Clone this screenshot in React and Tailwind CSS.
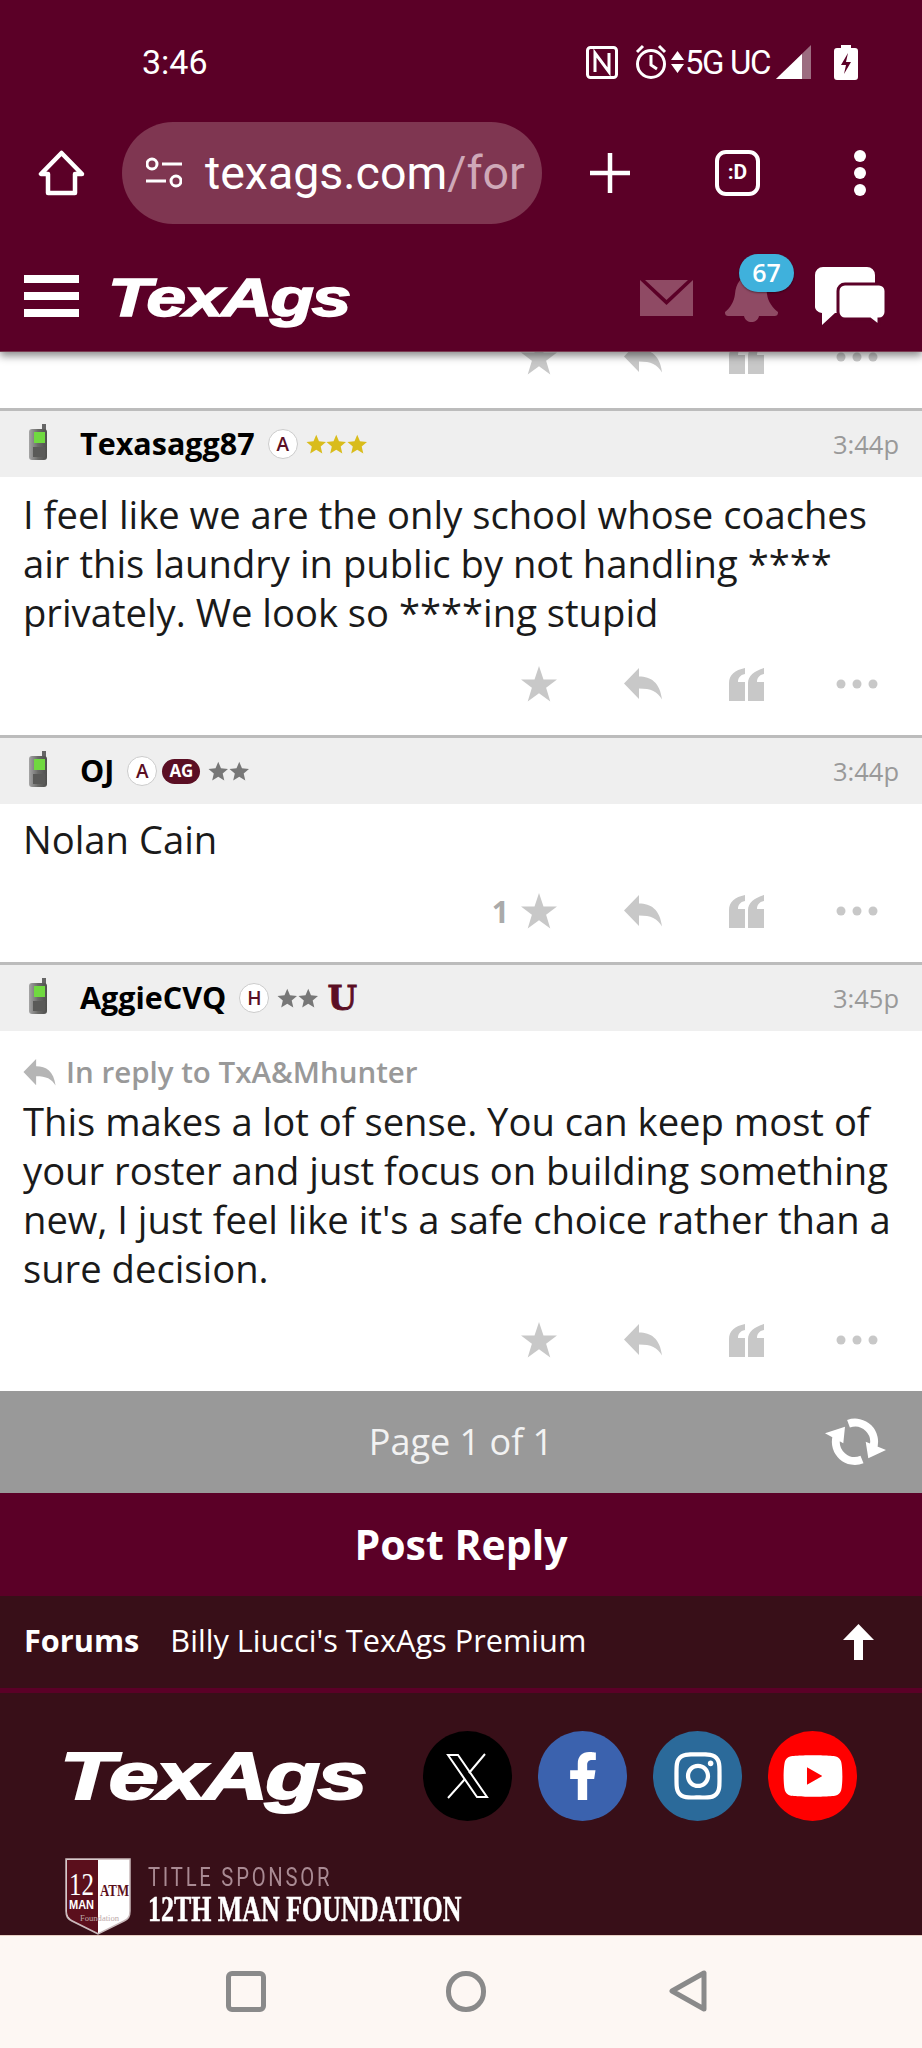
import React from "react";
import { FaFacebookF, FaInstagram, FaYoutube } from "react-icons/fa";

const OPEN = "font-['Open_Sans',sans-serif]";

function Logo({ className }) {
  return (
    <span className={`font-['Liberation_Sans',sans-serif] font-bold italic text-white whitespace-nowrap inline-block origin-left ${className}`}>
      TexAgs
    </span>
  );
}

function Phone() {
  return (
    <svg width="22" height="38" viewBox="0 0 22 38" className="shrink-0 -mt-[4px]">
      <defs>
        <filter id="soft" x="-20%" y="-20%" width="140%" height="140%">
          <feGaussianBlur stdDeviation="0.7" />
        </filter>
        <linearGradient id="body" x1="0" x2="1" y1="0" y2="0">
          <stop offset="0" stopColor="#a5a5a5" />
          <stop offset="0.5" stopColor="#6a6a68" />
          <stop offset="1" stopColor="#4f4f4d" />
        </linearGradient>
      </defs>
      <g filter="url(#soft)">
        <rect x="15" y="1" width="4" height="8" fill="#666" />
        <rect x="2" y="6" width="18" height="31" rx="3" fill="url(#body)" />
        <rect x="7" y="9" width="11" height="11" fill="#6fd93f" />
        <rect x="6" y="24" width="12" height="10" fill="#5a5a58" />
      </g>
    </svg>
  );
}

function Circle({ letter }) {
  return (
    <span className={`${OPEN} ml-[13px] w-[30px] h-[30px] rounded-full bg-white border border-[#ccc] flex items-center justify-center text-[19px] font-semibold text-[#5b0f24]`}>
      {letter}
    </span>
  );
}

function Stars({ n, color }) {
  return (
    <span className={`flex ml-[8px] ${color}`}>
      {Array.from({ length: n }).map((_, i) => (
        <svg key={i} width="20.500" height="20.500" viewBox="0 0 24 24" fill="currentColor">
          <path d="M12 1l3.200 7.600 8.200.7-6.200 5.400 1.900 8L12 18.400 4.900 22.700l1.900-8L.6 9.300l8.200-.7z" />
        </svg>
      ))}
    </span>
  );
}

function PostHead({ name, time, children }) {
  return (
    <div className="border-t-[3px] border-[#bcbcbc]">
      <div className={`${OPEN} h-[66px] bg-[#efefef] flex items-center pl-[27px] pr-[23px]`}>
        <Phone />
        <span className="ml-[31px] text-[30.500px] font-bold text-black">{name}</span>
        {children}
        <span className="ml-auto text-[25.500px] text-[#999]">{time}</span>
      </div>
    </div>
  );
}

function Actions({ count }) {
  return (
    <div className={`${OPEN} h-[98px] flex items-center justify-end pr-[44px] pb-[4px] text-[#c8c8c8]`}>
      {count && <span className="mr-[12px] text-[30px] font-bold text-[#aaa]">{count}</span>}
      <svg width="36" height="36" viewBox="0 0 36 36" fill="currentColor">
        <path d="M18 0l4.500 13.400 13.500.1-10.900 8.300 4.200 13.700L18 27.300 6.700 35.500l4.200-13.700L0 13.500l13.500-.1z" />
      </svg>
      <svg width="38" height="32" viewBox="0 0 38 32" fill="currentColor" className="ml-[67px]">
        <path d="M15 0v8.500c12 0 21 6 23 23-4.500-8-11-11-23-11V31L0 15.500z" />
      </svg>
      <svg width="35" height="33" viewBox="0 0 35 33" fill="currentColor" className="ml-[67px]">
        <path d="M0 33V15C0 7 6 2 16 0v6c-5 1-7 4-7 8h7v19zM19 33V15c0-7 6-12 16-15v6c-5 1-7 4-7 8h7v19z" />
      </svg>
      <svg width="42" height="10" viewBox="0 0 42 10" fill="currentColor" className="ml-[72px]">
        <circle cx="5" cy="5" r="4.500" />
        <circle cx="21" cy="5" r="4.500" />
        <circle cx="37" cy="5" r="4.500" />
      </svg>
    </div>
  );
}

function StatusBar() {
  return (
    <div className="h-[110px] flex items-center pl-[142px] pr-[64px] pt-[14px] text-white font-['Roboto',sans-serif]">
      <span className="text-[34px]">3:46</span>
      <div className="ml-auto flex items-center">
        <svg width="32" height="33" viewBox="0 0 32 33">
          <rect x="1.500" y="1.500" width="29" height="30" rx="3" fill="none" stroke="white" strokeWidth="3" />
          <path d="M9 26V7l14 19V7" fill="none" stroke="white" strokeWidth="3" />
        </svg>
        <svg width="34" height="36" viewBox="0 0 34 36" fill="none" stroke="white" strokeWidth="3" className="ml-[16px]">
          <circle cx="17" cy="20" r="13.500" />
          <path d="M17 11v10l6 4M3 8l6-6M31 8l-6-6" />
        </svg>
        <svg width="13" height="24" viewBox="0 0 13 24" fill="white" className="ml-[3px]">
          <path d="M6.500 1L13 10H0zM6.500 23L0 14h13z" />
        </svg>
        <span className="text-[33px] tracking-[-1.500px] leading-none ml-[1px]">5G</span>
        <span className="text-[33px] tracking-[-1.500px] leading-none ml-[7px]">UC</span>
        <svg width="35" height="34" viewBox="0 0 35 34" className="ml-[6px]">
          <path d="M0 34L35 0v34z" fill="#9c6c80" />
          <path d="M0 34L26 9v25z" fill="white" />
        </svg>
        <svg width="24" height="35" viewBox="0 0 24 35" className="ml-[23px]">
          <path d="M7 0h10v3h4a3 3 0 0 1 3 3v26a3 3 0 0 1-3 3H3a3 3 0 0 1-3-3V6a3 3 0 0 1 3-3h4z" fill="white" />
          <path d="M14 8l-7 12h5l-2 9 7-12h-5z" fill="#5b0027" />
        </svg>
      </div>
    </div>
  );
}

function BrowserBar() {
  return (
    <div className="h-[125px] flex items-center pl-[38px] text-white font-['Roboto',sans-serif]">
      <svg width="47" height="46" viewBox="0 0 47 46" fill="none" stroke="white" strokeWidth="4.500" strokeLinejoin="round">
        <path d="M23.500 3L3 24h7v19h27V24h7z" />
      </svg>
      <div className="ml-[37px] w-[420px] h-[102px] rounded-full bg-[#7f3651] flex items-center pl-[24px] overflow-hidden">
        <svg width="36" height="32" viewBox="0 0 36 32" fill="none" stroke="white" strokeWidth="3" className="shrink-0">
          <circle cx="6" cy="7" r="5" />
          <path d="M16 7h20M0 24h20" />
          <circle cx="30" cy="24" r="5" />
        </svg>
        <span className="ml-[23px] pt-[3px] whitespace-nowrap text-[46.500px]">
          texags.com<span className="text-[#cfa9b8]">/for</span>
        </span>
      </div>
      <svg width="40" height="40" viewBox="0 0 40 40" stroke="white" strokeWidth="4.500" className="ml-[48px]">
        <path d="M20 0v40M0 20h40" />
      </svg>
      <div className="ml-[85px] w-[45px] h-[46px] rounded-[11px] border-[4px] border-white flex items-center justify-center text-[21px] font-bold">
        :D
      </div>
      <div className="ml-[94px] flex flex-col gap-[5px]">
        <span className="w-[12px] h-[12px] rounded-full bg-white" />
        <span className="w-[12px] h-[12px] rounded-full bg-white" />
        <span className="w-[12px] h-[12px] rounded-full bg-white" />
      </div>
    </div>
  );
}

function SiteBar() {
  return (
    <div className="h-[116px] flex items-center pl-[24px] pt-[6px]">
      <div className="w-[55px] flex flex-col gap-[9px]">
        <span className="h-[8px] bg-white" />
        <span className="h-[8px] bg-white" />
        <span className="h-[8px] bg-white" />
      </div>
      <div className="ml-[29px] mt-[3px] w-[240px] h-[60px] flex items-center">
        <Logo className="text-[53px] leading-none tracking-[-1.600px] [-webkit-text-stroke:1.600px_white] scale-x-[1.34]" />
      </div>
      <svg width="53" height="36" viewBox="0 0 53 36" className="ml-[292px] mt-[4px]">
        <path d="M0 0h53v36H0z" fill="#8f4a64" />
        <path d="M0 0l26.500 25L53 0" fill="#5b0027" />
        <path d="M5 0l21.500 20L48 0z" fill="#8f4a64" />
      </svg>
      <div className="relative ml-[32px] mt-[6px]">
        <svg width="53" height="46" viewBox="0 0 53 46" fill="#8f4a64">
          <path d="M26 0c11 0 15 8 16 18 1 8 6 14 11 18 0 3-1 4-4 4H4c-3 0-4-1-4-4 5-4 9-10 10-18C11 8 15 0 26 0zM19 40h15c-1 4-4 6-7.500 6S20 44 19 40z" />
        </svg>
        <span className={`${OPEN} absolute -top-[22px] left-[14px] w-[55px] h-[38px] rounded-full bg-[#3fb1dc] text-white text-[25px] font-semibold flex items-center justify-center shadow-[0_1px_2px_rgba(0,0,0,0.4)]`}>
          67
        </span>
      </div>
      <svg width="71" height="59" viewBox="0 0 71 59" className="ml-[37px]">
        <path d="M8 0h44a8 8 0 0 1 8 8v30a8 8 0 0 1-8 8H20L7 58V46a7 7 0 0 1-7-8V8a8 8 0 0 1 8-8z" fill="white" />
        <path d="M30 17h34a7 7 0 0 1 7 7v21a7 7 0 0 1-7 7h0v7L55 52H30a7 7 0 0 1-7-7V24a7 7 0 0 1 7-7z" fill="white" stroke="#5b0027" strokeWidth="3" />
      </svg>
    </div>
  );
}

function Social({ bg, children }) {
  return (
    <span className={`w-[89px] h-[90px] rounded-full flex items-center justify-center text-white ${bg}`}>
      {children}
    </span>
  );
}

function Shield() {
  return (
    <svg width="66" height="77" viewBox="0 0 66 77" className="shrink-0 overflow-visible">
      <path d="M1 1h64v52c0 6-2 8-6 10L33 76 7 63c-4-2-6-4-6-10z" fill="white" stroke="#c9b9bb" strokeWidth="1.500" />
      <path d="M2 2h31v73L7 62c-3-2-5-4-5-9z" fill="#5b0f1c" />
      <text x="4" y="37" fill="white" fontSize="32" fontFamily="Liberation Serif" textLength="25" lengthAdjust="spacingAndGlyphs">12</text>
      <text x="4" y="51" fill="white" fontSize="13" fontWeight="bold" fontFamily="Liberation Sans" textLength="25" lengthAdjust="spacingAndGlyphs">MAN</text>
      <text x="35" y="38" fill="#5b0f1c" fontSize="16" fontWeight="bold" fontFamily="Liberation Serif" textLength="29" lengthAdjust="spacingAndGlyphs">ATM</text>
      <text x="15" y="63" fill="#bda9a9" fontSize="8" fontFamily="Liberation Serif" textLength="39" lengthAdjust="spacingAndGlyphs">Foundation</text>
    </svg>
  );
}

export default function App() {
  return (
    <div className="w-[922px] h-[2048px] overflow-hidden flex flex-col bg-white">
      <header className="relative z-10 bg-[#5b0027] shadow-[0_4px_8px_rgba(0,0,0,0.45)] border-b border-[#7a3a50]">
        <StatusBar />
        <BrowserBar />
        <SiteBar />
      </header>

      <div className="h-[56px] overflow-hidden">
        <div className="-mt-[42px]">
          <Actions />
        </div>
      </div>

      <PostHead name="Texasagg87" time="3:44p">
        <Circle letter="A" />
        <Stars n={3} color="text-[#d9bc1c]" />
      </PostHead>
      <div className={`${OPEN} pt-[13px] px-[23px] text-[38.200px] leading-[49px] text-[#1a1a1a]`}>
        I feel like we are the only school whose coaches air this laundry in public by not handling **** privately. We look so ****ing stupid
      </div>
      <Actions />

      <PostHead name="OJ" time="3:44p">
        <Circle letter="A" />
        <span className={`${OPEN} ml-[5px] h-[25px] px-[7px] rounded-full bg-[#5b0f24] text-white text-[17px] font-bold flex items-center`}>AG</span>
        <Stars n={2} color="text-[#777]" />
      </PostHead>
      <div className={`${OPEN} pt-[11px] px-[23px] text-[38.200px] leading-[49px] text-[#1a1a1a]`}>Nolan Cain</div>
      <Actions count="1" />

      <PostHead name="AggieCVQ" time="3:45p">
        <Circle letter="H" />
        <Stars n={2} color="text-[#777]" />
        <span className="ml-[9px] font-['DejaVu_Serif',serif] font-bold text-[34px] leading-none text-[#5b0f24] [-webkit-text-stroke:0.8px_#5b0f24]">U</span>
      </PostHead>
      <div className={`${OPEN} h-[66px] pl-[23px] pt-[16px] flex items-center text-[29.500px] font-semibold text-[#999]`}>
        <svg width="33" height="27" viewBox="0 0 38 32" fill="#b5b5b5">
          <path d="M15 0v8.500c12 0 21 6 23 23-4.500-8-11-11-23-11V31L0 15.500z" />
        </svg>
        <span className="ml-[10px]">In reply to TxA&amp;Mhunter</span>
      </div>
      <div className={`${OPEN} px-[23px] text-[38.200px] leading-[49px] text-[#1a1a1a]`}>
        This makes a lot of sense. You can keep most of your roster and just focus on building something new, I just feel like it's a safe choice rather than a sure decision.
      </div>
      <Actions />

      <div className={`${OPEN} h-[102px] bg-[#999] relative flex items-center justify-center text-[36px] text-[#f2f2f2]`}>
        Page 1 of 1
        <svg width="61" height="47" viewBox="0 0 61 47" className="absolute right-[36px] top-[27px]">
          <g fill="none" stroke="white" strokeWidth="8">
            <path d="M23.500 5.800A19 19 0 0 1 47.900 30.200" />
            <path d="M37 41.500A19 19 0 0 1 11.500 19" />
          </g>
          <path d="M40.700 23.700L61 32 43.300 40.300zM0 15.300L20 8.700 18.300 25.300z" fill="white" />
        </svg>
      </div>
      <div className={`${OPEN} h-[103px] bg-[#5b0027] flex items-center justify-center text-[41px] font-bold text-white`}>
        Post Reply
      </div>
      <div className={`${OPEN} h-[92px] bg-[#380f18] flex items-center pl-[24px] pr-[48px] pb-[4px] text-white text-[30.700px]`}>
        <span className="font-bold">Forums</span>
        <span className="ml-[31px]">Billy Liucci's TexAgs Premium</span>
        <svg width="31" height="36" viewBox="0 0 31 36" fill="white" className="ml-auto mt-[4px]">
          <path d="M15.500 0L31 16H20v20h-9V16H0z" />
        </svg>
      </div>
      <div className="h-[5px] bg-[#5b0027]" />

      <footer className="flex-1 bg-[#380f18] flex flex-col pl-[65px] pt-[38px] border-b border-[#e8cfc4]">
        <div className="flex items-center">
          <div className="-ml-[5px] w-[300px] h-[70px] flex items-center">
            <Logo className="text-[66px] leading-none tracking-[-2px] [-webkit-text-stroke:2px_white] scale-x-[1.36]" />
          </div>
          <div className="ml-[63px] flex gap-[26px]">
            <Social bg="bg-black">
              <svg width="45" height="46" viewBox="0 0 45 46" fill="none" stroke="white" strokeWidth="2">
                <path d="M3 2h10l29 42H32z" />
                <path d="M40 1L24 20M20 26L3 45" />
              </svg>
            </Social>
            <Social bg="bg-[#3b62ae]"><FaFacebookF size={48} /></Social>
            <Social bg="bg-[#2b6a9a]"><FaInstagram size={54} /></Social>
            <Social bg="bg-[#ff0000]"><FaYoutube size={62} /></Social>
          </div>
        </div>
        <div className="mt-[37px] flex">
          <Shield />
          <div className="ml-[17px] pt-[6px] flex flex-col">
            <span className="font-['Roboto',sans-serif] text-[25px] leading-[28px] tracking-[3.400px] text-[#a98a93] whitespace-nowrap origin-left scale-x-[.81] inline-block">TITLE SPONSOR</span>
            <span className="font-['Liberation_Serif',serif] font-bold text-[36px] leading-[34px] text-white whitespace-nowrap origin-left scale-x-[.72] inline-block [-webkit-text-stroke:0.5px_white]">12TH MAN FOUNDATION</span>
          </div>
        </div>
      </footer>

      <nav className="h-[112px] shrink-0 bg-[#fdf7f3] flex items-center pl-[226px] pb-[2px]">
        <span className="w-[40px] h-[41px] rounded-[6px] border-[5px] border-[#8a8a8a]" />
        <span className="ml-[180px] w-[40px] h-[41px] rounded-full border-[5px] border-[#8a8a8a]" />
        <svg width="38" height="42" viewBox="0 0 38 42" fill="none" stroke="#8a8a8a" strokeWidth="5" strokeLinejoin="round" className="ml-[183px]">
          <path d="M35 3v36L3 21z" />
        </svg>
      </nav>
    </div>
  );
}
